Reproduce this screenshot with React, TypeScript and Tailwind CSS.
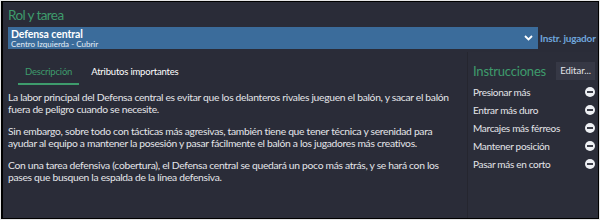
const paragraphs = [
  "La labor principal del Defensa central es evitar que los delanteros rivales jueguen el balón, y sacar el balón fuera de peligro cuando se necesite.",
  "Sin embargo, sobre todo con tácticas más agresivas, también tiene que tener técnica y serenidad para ayudar al equipo a mantener la posesión y pasar fácilmente el balón a los jugadores más creativos.",
  "Con una tarea defensiva (cobertura), el Defensa central se quedará un poco más atrás, y se hará con los pases que busquen la espalda de la línea defensiva.",
];

const instructions = [
  "Presionar más",
  "Entrar más duro",
  "Marcajes más férreos",
  "Mantener posición",
  "Pasar más en corto",
];

function MinusCircle() {
  return (
    <svg width="10" height="10" viewBox="0 0 10 10" className="shrink-0">
      <circle cx="5" cy="5" r="5" fill="#eef0f4" />
      <rect x="2" y="4.1" width="6" height="1.8" fill="#2a2c38" />
    </svg>
  );
}

export default function App() {
  return (
    <div
      className="w-[600px] h-[220px] border border-[#e6e6e6] bg-black"
      style={{ fontFamily: "Lato, 'Open Sans', sans-serif" }}
    >
      <div className="h-full border border-black border-l-2 bg-[#2a2c38] flex flex-col overflow-hidden">
        {/* Header */}
        <div className="px-[5px] pt-[3px]">
          <h1 className="text-[13.5px] leading-[20px] text-[#3e9b6c] tracking-[-0.6px]">Rol y tarea</h1>
          <div className="flex items-center mt-[2px]">
            <div className="w-[530px] shrink-0 h-[22px] bg-[#3b6c9b] flex items-center justify-between pl-[3px] pr-[5px]">
              <div className="flex flex-col">
                <span className="text-[10.5px] font-bold text-white leading-[12px] tracking-[-0.1px]">Defensa central</span>
                <span className="text-[8px] text-[#e6eef7] leading-[9px]">Centro Izquierda - Cubrir</span>
              </div>
              <svg width="9" height="6" viewBox="0 0 9 6">
                <path d="M1 1l3.5 3.5L8 1" stroke="#ffffff" strokeWidth="1.8" fill="none" />
              </svg>
            </div>
            <span className="ml-[2px] whitespace-nowrap text-[10px] font-bold text-[#6fa6dc] tracking-[-0.2px]">Instr. jugador</span>
          </div>
        </div>

        {/* Body */}
        <div className="flex flex-1 mt-[3px]">
          <div className="flex-1 pl-[5px] pr-[12px] pt-[14px]">
            <div className="flex items-end gap-[12px] pl-[10px]">
              <div className="flex flex-col items-center">
                <span className="text-[9.5px] text-[#3e9b6c] px-[7px] leading-[12px] tracking-[-0.2px]">Descripción</span>
                <div className="mt-[5px] h-[2px] w-[61px] bg-[#3e9b6c]" />
              </div>
              <span className="text-[9.5px] text-white leading-[12px] mb-[7px] tracking-[-0.2px]">Atributos importantes</span>
            </div>
            <div className="mt-[6px] flex flex-col gap-[10px] text-[10.3px] leading-[12px] text-[#e4e5e9] tracking-[-0.3px]">
              {paragraphs.map((p, i) => (
                <p key={i}>{p}</p>
              ))}
            </div>
          </div>

          {/* Instructions panel */}
          <div className="w-[131px] shrink-0 border-l border-[#25262f] bg-[#2b2d39] pl-[5px] pr-[3px] pt-[10px]">
            <div className="flex items-center justify-between">
              <span className="text-[13px] text-[#3e9b6c] leading-[18px] tracking-[-0.2px]">Instrucciones</span>
              <span className="bg-[#363845] px-[4px] py-[3px] text-[9.5px] text-[#e4e5e9] leading-[12px]">Editar...</span>
            </div>
            <ul className="mt-[3px]">
              {instructions.map((item) => (
                <li key={item} className="flex items-center justify-between h-[18px] text-[10px] text-[#e4e5e9] tracking-[-0.3px]">
                  <span>{item}</span>
                  <MinusCircle />
                </li>
              ))}
            </ul>
          </div>
        </div>
      </div>
    </div>
  );
}
